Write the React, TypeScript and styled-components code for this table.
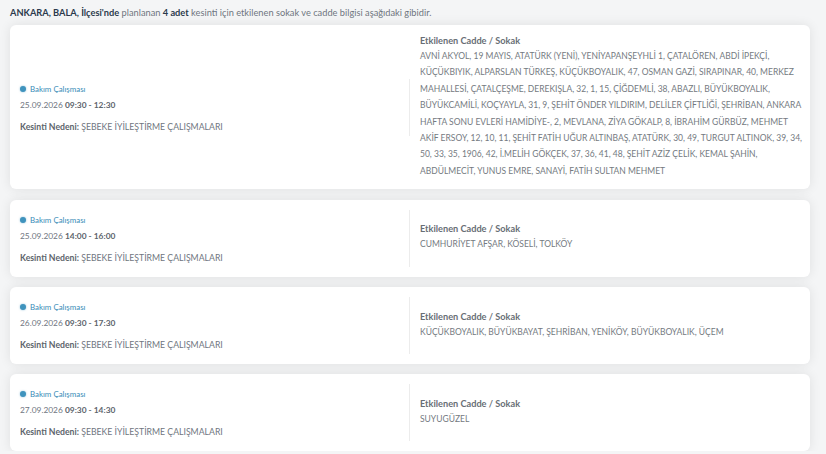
import React from "react";
import styled, { createGlobalStyle } from "styled-components";

const Global = createGlobalStyle`
  html, body { margin: 0; padding: 0; background: #f4f5f6; }
  body { font-family: Lato, "Open Sans", sans-serif; }
  * { box-sizing: border-box; }
`;

const Page = styled.div`
  padding: 0 16px 0 10px;
  width: 826px;
`;

const Header = styled.div`
  height: 25px;
  line-height: 25px;
  font-size: 9.25px;
  color: #6f7680;
  white-space: nowrap;
  b { color: #2b3a4c; font-weight: 700; }
`;

const List = styled.div`
  display: flex;
  flex-direction: column;
  gap: 10.4px;
`;

const Card = styled.div`
  background: #fff;
  border-radius: 6px;
  box-shadow: 0 0 12px rgba(0, 0, 0, 0.09);
  padding: 10px 10px 10px 0;
  display: flex;
  align-items: center;
`;

const Left = styled.div`
  width: 400px;
  flex: none;
  padding: 0 0 3px 10px;
  border-right: 1px solid #ececec;
  display: flex;
  flex-direction: column;
`;

const Tag = styled.div`
  height: 20px;
  display: flex;
  align-items: center;
  gap: 4px;
  font-size: 7.9px;
  color: #3a8db8;
  &::before {
    content: "";
    width: 6px;
    height: 6px;
    border-radius: 50%;
    background: #3f93bd;
    box-shadow: 0 0 2px rgba(63, 147, 189, 0.6);
  }
`;

const Line = styled.div<{ $size: number; $gap?: number }>`
  font-size: ${(p) => p.$size}px;
  line-height: 12px;
  color: #6f7680;
  margin-top: ${(p) => p.$gap ?? 0}px;
  white-space: nowrap;
  b { font-weight: 700; color: #5d646c; }
`;

const Right = styled.div`
  flex: 1;
  padding-left: 10px;
`;

const Title = styled.div`
  font-size: 9.2px;
  line-height: 12px;
  font-weight: 700;
  color: #686e75;
`;

const Streets = styled.div`
  margin-top: 1px;
  font-size: 8.5px;
  line-height: 16.4px;
  color: #747a81;
  white-space: pre;
`;

type Item = { date: string; time: string; streets: string };

const items: Item[] = [
  {
    date: "25.09.2026",
    time: "09:30 - 12:30",
    streets: [
      "AVNİ AKYOL, 19 MAYIS, ATATÜRK (YENİ), YENİYAPANŞEYHLİ 1, ÇATALÖREN, ABDİ İPEKÇİ,",
      "KÜÇÜKBIYIK, ALPARSLAN TÜRKEŞ, KÜÇÜKBOYALIK, 47, OSMAN GAZİ, SIRAPINAR, 40, MERKEZ",
      "MAHALLESİ, ÇATALÇEŞME, DEREKIŞLA, 32, 1, 15, ÇİĞDEMLİ, 38, ABAZLI, BÜYÜKBOYALIK,",
      "BÜYÜKCAMİLİ, KOÇYAYLA, 31, 9, ŞEHİT ÖNDER YILDIRIM, DELİLER ÇİFTLİĞİ, ŞEHRİBAN, ANKARA",
      "HAFTA SONU EVLERİ HAMİDİYE-, 2, MEVLANA, ZİYA GÖKALP, 8, İBRAHİM GÜRBÜZ, MEHMET",
      "AKİF ERSOY, 12, 10, 11, ŞEHİT FATİH UĞUR ALTINBAŞ, ATATÜRK, 30, 49, TURGUT ALTINOK, 39, 34,",
      "50, 33, 35, 1906, 42, İ.MELİH GÖKÇEK, 37, 36, 41, 48, ŞEHİT AZİZ ÇELİK, KEMAL ŞAHİN,",
      "ABDÜLMECİT, YUNUS EMRE, SANAYİ, FATİH SULTAN MEHMET",
    ].join("\n"),
  },
  { date: "25.09.2026", time: "14:00 - 16:00", streets: "CUMHURİYET AFŞAR, KÖSELİ, TOLKÖY" },
  {
    date: "26.09.2026",
    time: "09:30 - 17:30",
    streets: "KÜÇÜKBOYALIK, BÜYÜKBAYAT, ŞEHRİBAN, YENİKÖY, BÜYÜKBOYALIK, ÜÇEM",
  },
  { date: "27.09.2026", time: "09:30 - 14:30", streets: "SUYUGÜZEL" },
];

export default function App() {
  return (
    <Page>
      <Global />
      <Header>
        <b>ANKARA, BALA, İlçesi'nde</b> planlanan <b>4 adet</b> kesinti için etkilenen sokak ve cadde bilgisi aşağıdaki gibidir.
      </Header>
      <List>
        {items.map((it, i) => (
          <Card key={i}>
            <Left>
              <Tag>Bakım Çalışması</Tag>
              <Line $size={8.4}>
                {it.date} <b>{it.time}</b>
              </Line>
              <Line $size={8.7} $gap={10}>
                <b>Kesinti Nedeni:</b> ŞEBEKE İYİLEŞTİRME ÇALIŞMALARI
              </Line>
            </Left>
            <Right>
              <Title>Etkilenen Cadde / Sokak</Title>
              <Streets>{it.streets}</Streets>
            </Right>
          </Card>
        ))}
      </List>
    </Page>
  );
}
